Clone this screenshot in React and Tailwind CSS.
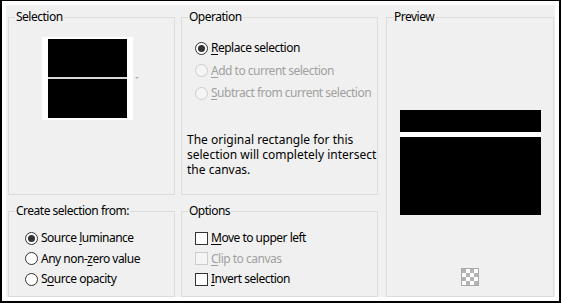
function Group({ label, className, children }) {
  return (
    <div className={`relative border border-[#dcdcdc] ${className}`}>
      <span className="absolute -top-[9px] left-[6px] bg-[#f0f0f0] px-[1px] leading-[16px] tracking-[-0.5px] text-black">{label}</span>
      {children}
    </div>
  )
}

function Radio({ checked, disabled }) {
  const ring = disabled ? '#cccccc' : '#333333'
  const fill = disabled ? '#f5f5f5' : '#ffffff'
  return (
    <svg width="13" height="13" viewBox="0 0 13 13" className="shrink-0">
      <circle cx="6.5" cy="6.5" r="6" fill={fill} stroke={ring} strokeWidth="1" />
      {checked && <circle cx="6.5" cy="6.5" r="3.5" fill="#333333" />}
    </svg>
  )
}

function Check({ disabled }) {
  return (
    <span
      className={`h-[13px] w-[13px] shrink-0 border ${
        disabled ? 'border-[#cccccc] bg-[#f5f5f5]' : 'border-[#333333] bg-white'
      }`}
    />
  )
}

function Row({ control, disabled, h = 'h-[20.5px]', children }) {
  return (
    <div className={`flex items-center gap-[3px] whitespace-nowrap ${h} ${disabled ? 'text-[#a0a0a0]' : 'text-black'}`}>
      {control}
      <span className="leading-[16px] tracking-[-0.5px]">{children}</span>
    </div>
  )
}

function Checker() {
  const cells = []
  for (let r = 0; r < 4; r++) {
    for (let c = 0; c < 4; c++) {
      if ((r + c) % 2 === 0) cells.push(<rect key={`${r}-${c}`} x={1 + c * 4} y={1 + r * 4} width="4" height="4" fill="#b4b4b4" />)
    }
  }
  return (
    <svg width="18" height="18" viewBox="0 0 18 18">
      <rect x="0.5" y="0.5" width="17" height="17" fill="#ffffff" stroke="#a8a8a8" />
      {cells}
    </svg>
  )
}

export default function App() {
  return (
    <div
      className="h-[303px] w-[561px] bg-black pb-[2px] pl-[2px] pr-[2px] pt-[1px] text-[12px]"
      style={{ fontFamily: '"Noto Sans", "Open Sans", sans-serif' }}
    >
      <div className="h-full w-full bg-white p-[4px]">
        <div className="flex h-full w-full gap-[6px] bg-[#f0f0f0] pl-[2px] pt-[12px]">
          <div className="flex w-[167px] flex-col gap-[16px]">
            <Group label="Selection" className="h-[178px]">
              <div className="relative ml-[33px] mt-[19px] flex h-[83px] w-[91px] flex-col bg-white px-[6px] pt-[2px]">
                <div className="h-[38px] bg-black" />
                <div className="h-[2px] bg-[#d8d8d8]" />
                <div className="h-[39px] bg-black" />
                <span className="absolute left-[93px] top-[40px] h-0 w-0 border-l-[2px] border-r-[2px] border-t-[2px] border-l-transparent border-r-transparent border-t-[#b0b0b0]" />
              </div>
            </Group>
            <Group label="Create selection from:" className="h-[86px] pl-[16px] pt-[16px]">
              <Row control={<Radio checked />}>
                Source <span className="underline underline-offset-2">l</span>uminance
              </Row>
              <Row control={<Radio />}>
                Any non-<span className="underline underline-offset-2">z</span>ero value
              </Row>
              <Row control={<Radio />}>
                S<span className="underline underline-offset-2">o</span>urce opacity
              </Row>
            </Group>
          </div>

          <div className="flex w-[197px] flex-col gap-[16px]">
            <Group label="Operation" className="h-[178px] pl-[13px] pt-[19px]">
              <Row control={<Radio checked />} h="h-[22.5px]">
                <span className="underline underline-offset-2">R</span>eplace selection
              </Row>
              <Row control={<Radio disabled />} disabled h="h-[22.5px]">
                <span className="underline underline-offset-2">A</span>dd to current selection
              </Row>
              <Row control={<Radio disabled />} disabled h="h-[22.5px]">
                <span className="underline underline-offset-2">S</span>ubtract from current selection
              </Row>
              <p className="-ml-[8px] mt-[27px] leading-[15px] text-black">
                The original rectangle for this
                <br />
                selection will completely intersect
                <br />
                the canvas.
              </p>
            </Group>
            <Group label="Options" className="h-[86px] pl-[13px] pt-[16px]">
              <Row control={<Check />}>
                <span className="underline underline-offset-2">M</span>ove to upper left
              </Row>
              <Row control={<Check disabled />} disabled>
                <span className="underline underline-offset-2">C</span>lip to canvas
              </Row>
              <Row control={<Check />}>
                <span className="underline underline-offset-2">I</span>nvert selection
              </Row>
            </Group>
          </div>

          <div className="ml-[2px] flex w-[168px] flex-col">
            <Group label="Preview" className="flex h-[280px] flex-col items-center pt-[92px]">
              <div className="flex h-[105px] w-[141px] flex-col bg-white">
                <div className="h-[22px] bg-black" />
                <div className="h-[5px]" />
                <div className="h-[78px] bg-black" />
              </div>
              <div className="mt-[53px]">
                <Checker />
              </div>
            </Group>
          </div>
        </div>
      </div>
    </div>
  )
}
